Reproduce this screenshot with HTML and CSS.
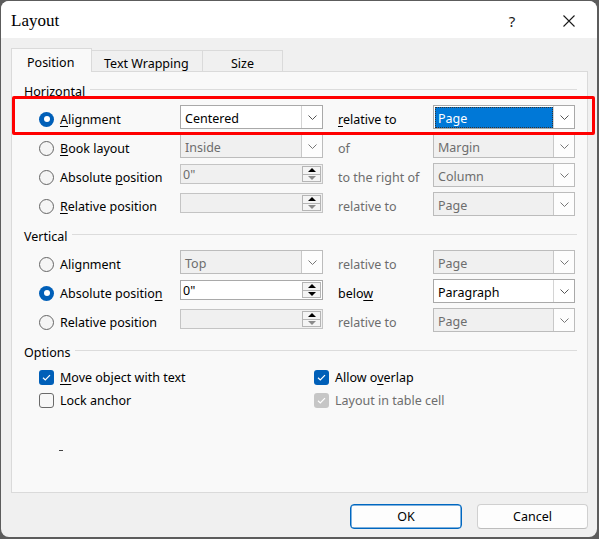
FILE: index.html
```html
<!DOCTYPE html>
<html>
<head>
<meta charset="utf-8">
<link rel="stylesheet" href="styles.css">
</head>
<body>
<div class="dialog">
  <div class="titlebar">
    <span class="title">Layout</span>
    <span class="help">?</span>
    <span class="close"><svg width="12" height="12" viewBox="0 0 12 12"><path d="M0.5 0.5 L11.5 11.5 M11.5 0.5 L0.5 11.5" stroke="#1a1a1a" stroke-width="1.1" fill="none"/></svg></span>
  </div>
  <div class="content">
    <div class="tabs">
      <div class="tab active">Position</div>
      <div class="tab">Text Wrapping</div>
      <div class="tab tab-size">Size</div>
    </div>
    <div class="panel">
      <div class="group-h"><span>Horizontal</span><i class="rule"></i></div>
      <div class="rows">
        <div class="row">
          <div class="opt"><span class="radio on"></span><span><u>A</u>lignment</span></div>
          <div class="combo"><span class="val">Centered</span><span class="dd"><svg width="9" height="5" viewBox="0 0 9 5"><polyline points="0.5,0.5 4.5,4.5 8.5,0.5" fill="none" stroke="#555" stroke-width="1"/></svg></span></div>
          <span class="rel"><u>r</u>elative to</span>
          <div class="combo"><span class="val"><span class="sel">Page</span></span><span class="dd"><svg width="9" height="5" viewBox="0 0 9 5"><polyline points="0.5,0.5 4.5,4.5 8.5,0.5" fill="none" stroke="#555" stroke-width="1"/></svg></span></div>
        </div>
        <div class="row">
          <div class="opt"><span class="radio"></span><span><u>B</u>ook layout</span></div>
          <div class="combo dis"><span class="val">Inside</span><span class="dd"><svg width="9" height="5" viewBox="0 0 9 5"><polyline points="0.5,0.5 4.5,4.5 8.5,0.5" fill="none" stroke="#777" stroke-width="1"/></svg></span></div>
          <span class="rel dis">of</span>
          <div class="combo dis"><span class="val">Margin</span><span class="dd"><svg width="9" height="5" viewBox="0 0 9 5"><polyline points="0.5,0.5 4.5,4.5 8.5,0.5" fill="none" stroke="#777" stroke-width="1"/></svg></span></div>
        </div>
        <div class="row">
          <div class="opt"><span class="radio"></span><span>Absolute <u>p</u>osition</span></div>
          <div class="spin dis"><span class="val">0"</span><span class="btns"><span class="b"><i class="up"></i></span><span class="b"><i class="down gray"></i></span></span></div>
          <span class="rel dis">to the right of</span>
          <div class="combo dis"><span class="val">Column</span><span class="dd"><svg width="9" height="5" viewBox="0 0 9 5"><polyline points="0.5,0.5 4.5,4.5 8.5,0.5" fill="none" stroke="#777" stroke-width="1"/></svg></span></div>
        </div>
        <div class="row">
          <div class="opt"><span class="radio"></span><span><u>R</u>elative position</span></div>
          <div class="spin dis"><span class="val"></span><span class="btns"><span class="b"><i class="up"></i></span><span class="b"><i class="down gray"></i></span></span></div>
          <span class="rel dis">relative to</span>
          <div class="combo dis"><span class="val">Page</span><span class="dd"><svg width="9" height="5" viewBox="0 0 9 5"><polyline points="0.5,0.5 4.5,4.5 8.5,0.5" fill="none" stroke="#777" stroke-width="1"/></svg></span></div>
        </div>
      </div>

      <div class="group-h gap"><span>Vertical</span><i class="rule"></i></div>
      <div class="rows">
        <div class="row">
          <div class="opt"><span class="radio"></span><span>Alignment</span></div>
          <div class="combo dis"><span class="val">Top</span><span class="dd"><svg width="9" height="5" viewBox="0 0 9 5"><polyline points="0.5,0.5 4.5,4.5 8.5,0.5" fill="none" stroke="#777" stroke-width="1"/></svg></span></div>
          <span class="rel dis">relative to</span>
          <div class="combo dis"><span class="val">Page</span><span class="dd"><svg width="9" height="5" viewBox="0 0 9 5"><polyline points="0.5,0.5 4.5,4.5 8.5,0.5" fill="none" stroke="#777" stroke-width="1"/></svg></span></div>
        </div>
        <div class="row">
          <div class="opt"><span class="radio on"></span><span>Absolute positio<u>n</u></span></div>
          <div class="spin"><span class="val">0"</span><span class="btns"><span class="b"><i class="up"></i></span><span class="b"><i class="down"></i></span></span></div>
          <span class="rel">belo<u>w</u></span>
          <div class="combo"><span class="val">Paragraph</span><span class="dd"><svg width="9" height="5" viewBox="0 0 9 5"><polyline points="0.5,0.5 4.5,4.5 8.5,0.5" fill="none" stroke="#555" stroke-width="1"/></svg></span></div>
        </div>
        <div class="row">
          <div class="opt"><span class="radio"></span><span>Relative position</span></div>
          <div class="spin dis"><span class="val"></span><span class="btns"><span class="b"><i class="up"></i></span><span class="b"><i class="down gray"></i></span></span></div>
          <span class="rel dis">relative to</span>
          <div class="combo dis"><span class="val">Page</span><span class="dd"><svg width="9" height="5" viewBox="0 0 9 5"><polyline points="0.5,0.5 4.5,4.5 8.5,0.5" fill="none" stroke="#777" stroke-width="1"/></svg></span></div>
        </div>
      </div>

      <div class="group-h gap"><span>Options</span><i class="rule"></i></div>
      <div class="opts">
        <div class="chk-row"><span class="chk on"><svg width="15" height="15" viewBox="0 0 15 15"><polyline points="4,7.8 6.3,10 11,5.2" fill="none" stroke="#fff" stroke-width="1.2"/></svg></span><span><u>M</u>ove object with text</span></div>
        <div class="chk-row"><span class="chk on"><svg width="15" height="15" viewBox="0 0 15 15"><polyline points="4,7.8 6.3,10 11,5.2" fill="none" stroke="#fff" stroke-width="1.2"/></svg></span><span>Allow o<u>v</u>erlap</span></div>
        <div class="chk-row"><span class="chk"></span><span>Lock anchor</span></div>
        <div class="chk-row dis"><span class="chk on gray"><svg width="15" height="15" viewBox="0 0 15 15"><polyline points="4,7.8 6.3,10 11,5.2" fill="none" stroke="#fff" stroke-width="1.2"/></svg></span><span>Layout in table cell</span></div>
      </div>
      <div class="stray"></div>
    </div>
    <div class="buttons">
      <div class="btn primary">OK</div>
      <div class="btn">Cancel</div>
    </div>
  </div>
  <div class="redbox"></div>
</div>
</body>
</html>
```

FILE: styles.css
```css
html, body {
  margin: 0;
  padding: 0;
}
body {
  background: #5c5c5c;
  width: 599px;
  height: 539px;
  overflow: hidden;
  font-family: "Noto Sans", "Open Sans", sans-serif;
  font-size: 12.5px;
  color: #000;
}
u { text-decoration: underline; text-underline-offset: 2px; text-decoration-thickness: 1px; }

.dialog {
  position: relative;
  margin: 1px 0 0 1px;
  width: 596px;
  height: 536px;
  background: #f0f0f0;
  border-radius: 8px;
  overflow: hidden;
}

.titlebar {
  height: 37px;
  background: #ffffff;
  display: flex;
  align-items: center;
  position: relative;
}
.title {
  font-family: "Liberation Serif", serif;
  font-size: 17px;
  margin-left: 10px;
  margin-top: 3px;
  flex: 1;
}
.help {
  font-size: 15px;
  width: 20px;
  text-align: center;
  margin-right: 41px;
  margin-top: 2px;
  color: #1a1a1a;
}
.close {
  width: 12px;
  height: 12px;
  margin-right: 22px;
  margin-top: 2px;
  display: flex;
}

.content {
  padding: 10px 9px 0 10px;
}

.tabs {
  display: flex;
  align-items: flex-end;
  height: 23px;
  position: relative;
  z-index: 2;
}
.tab {
  box-sizing: border-box;
  height: 21px;
  border: 1px solid #dadada;
  border-bottom: none;
  border-left: none;
  padding: 4px 12px 0 12px;
  line-height: 17px;
  font-size: 12.5px;
  background: #f0f0f0;
}
.tab.active {
  height: 24px;
  margin-bottom: -1px;
  background: #f9f9f9;
  border-left: 1px solid #dadada;
  width: 81px;
  padding: 5px 0 0 15px;
}
.tab.tab-size {
  width: 80px;
  text-align: center;
  padding: 4px 0 0 0;
}
.tab:nth-child(2) {
  width: 111px;
}

.panel {
  box-sizing: border-box;
  height: 422px;
  width: 577px;
  border: 1px solid #dadada;
  background: #f9f9f9;
  padding: 11px 10px 0 12px;
}

.group-h {
  display: flex;
  height: 16px;
  line-height: 16px;
  margin-bottom: 6px;
}
.group-h span { position: relative; top: 1px; }
.group-h.gap { margin-top: 7px; }
.group-h .rule {
  flex: 1;
  height: 1px;
  background: #dcdcdc;
  margin: 6px 0 0 5px;
}

.rows {
  margin-left: 15px;
}
.row {
  display: grid;
  grid-template-columns: 141px 143px 110px 142px;
  height: 29px;
  align-items: start;
}
.opt {
  height: 29px;
  display: flex;
  align-items: center;
  gap: 6px;
}
.rel {
  height: 29px;
  line-height: 29px;
  padding-left: 15px;
}
.dis { color: #6d6d6d; }

.radio {
  box-sizing: border-box;
  width: 15px;
  height: 15px;
  border-radius: 50%;
  border: 1px solid #666;
  background: #f5f5f5;
  position: relative;
  margin-top: -1px;
}
.radio.on {
  border: none;
  background: #005fb8;
}
.radio.on::after {
  content: "";
  position: absolute;
  left: 4.5px;
  top: 4.5px;
  width: 6px;
  height: 6px;
  border-radius: 50%;
  background: #fff;
}

.combo {
  box-sizing: border-box;
  height: 24px;
  border: 1px solid #a9a9a9;
  background: #fff;
  display: flex;
}
.combo .val {
  flex: 1;
  padding: 4px 0 0 4px;
  line-height: 18px;
  color: #000;
  display: flex;
  align-items: flex-start;
}
.combo.dis {
  background: #f0f0f0;
  border-color: #bcbcbc;
}
.combo.dis .val { color: #6d6d6d; }
.combo .dd {
  width: 20px;
  border-left: 1px solid #d4d4d4;
  background: #fff;
  display: flex;
  align-items: center;
  justify-content: center;
}
.combo.dis .dd {
  background: #fdfdfd;
  border-left-color: #c8c8c8;
}
.combo .val .sel {
  flex: 1;
  margin: -3px 0 0 -3px;
  padding: 3px 0 0 3px;
  line-height: 18px;
  background: #0078d7;
  color: #fff;
  outline: 1px dotted #333;
  outline-offset: -1px;
}

.spin {
  box-sizing: border-box;
  height: 20px;
  margin-top: 1px;
  border: 1px solid #a9a9a9;
  background: #fff;
  display: flex;
}
.spin.dis {
  background: #f0f0f0;
  border-color: #c4c4c4;
}
.spin .val {
  flex: 1;
  line-height: 20px;
  padding-left: 2px;
}
.spin .btns {
  width: 19px;
  display: flex;
  flex-direction: column;
  gap: 0;
  padding: 1px 1px 1px 0;
}
.spin .b {
  flex: 1;
  box-sizing: border-box;
  border: 1px solid #b5b5b5;
  background: #f4f4f4;
  display: flex;
  align-items: center;
  justify-content: center;
}
.spin .b + .b { border-top: none; }
.up {
  width: 0; height: 0;
  border-left: 4px solid transparent;
  border-right: 4px solid transparent;
  border-bottom: 4px solid #000;
}
.down {
  width: 0; height: 0;
  border-left: 4px solid transparent;
  border-right: 4px solid transparent;
  border-top: 4px solid #000;
}
.down.gray { border-top-color: #8a8a8a; }

.opts {
  margin-left: 15px;
  display: grid;
  grid-template-columns: 275px auto;
  grid-auto-rows: 23px;
}
.chk-row {
  display: flex;
  align-items: center;
  gap: 6px;
}
.chk {
  box-sizing: border-box;
  width: 15px;
  height: 15px;
  border-radius: 3px;
  border: 1px solid #6a6a6a;
  background: #f7f7f7;
  display: flex;
}
.chk.on {
  border: none;
  background: #005fb8;
}
.chk.on.gray { background: #c6c6c6; }

.stray {
  margin: 38px 0 0 35px;
  width: 4px;
  height: 1px;
  background: #444;
}

.buttons {
  display: flex;
  justify-content: flex-end;
  gap: 15px;
  margin-top: 11px;
}
.btn {
  box-sizing: border-box;
  width: 111px;
  height: 25px;
  line-height: 24px;
  text-align: center;
  border: 1px solid #d0d0d0;
  border-bottom-color: #bdbdbd;
  border-radius: 4px;
  background: #fdfdfd;
}
.btn.primary {
  width: 112px;
  border: 1px solid #0067c0;
  box-shadow: inset 0 0 0 0.5px #0067c0;
  background: #fdfdfd;
}

.redbox {
  position: absolute;
  left: 11px;
  top: 95px;
  width: 583px;
  height: 39px;
  box-sizing: border-box;
  border: 3px solid #ff0000;
  border-radius: 2px;
  z-index: 5;
}
```
